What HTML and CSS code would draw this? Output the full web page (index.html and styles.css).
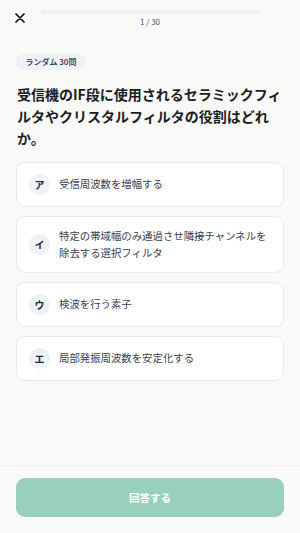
FILE: index.html
```html
<!DOCTYPE html>
<html lang="ja">
<head>
    <meta charset="UTF-8">
    <meta name="viewport" content="width=device-width, initial-scale=1.0">
    <title>クイズ</title>
    <link rel="stylesheet" href="styles.css">
</head>
<body>
    <div class="quiz-screen">
        <header class="quiz-header">
            <button class="close-button" aria-label="閉じる">
                <svg width="10" height="10" viewBox="0 0 10 10">
                    <path d="M1 1 L9 9 M9 1 L1 9" stroke="#111" stroke-width="1.7" stroke-linecap="round" fill="none"/>
                </svg>
            </button>
            <div class="progress">
                <div class="progress-bar"><div class="progress-fill"></div></div>
                <div class="progress-count">1 / 30</div>
            </div>
            <div class="header-spacer"></div>
        </header>

        <main class="quiz-body">
            <div class="mode-tag">ランダム 30問</div>
            <h1 class="question">受信機のIF段に使用されるセラミックフィルタやクリスタルフィルタの役割はどれか。</h1>

            <ul class="choices">
                <li class="choice">
                    <span class="choice-mark">ア</span>
                    <span class="choice-text">受信周波数を増幅する</span>
                </li>
                <li class="choice">
                    <span class="choice-mark">イ</span>
                    <span class="choice-text">特定の帯域幅のみ通過させ隣接チャンネルを除去する選択フィルタ</span>
                </li>
                <li class="choice">
                    <span class="choice-mark">ウ</span>
                    <span class="choice-text">検波を行う素子</span>
                </li>
                <li class="choice">
                    <span class="choice-mark">エ</span>
                    <span class="choice-text">局部発振周波数を安定化する</span>
                </li>
            </ul>
        </main>

        <footer class="quiz-footer">
            <button class="answer-button" disabled>回答する</button>
        </footer>
    </div>
</body>
</html>
```

FILE: styles.css
```css
body {
    margin: 0;
    background-color: #f9f9f8;
    font-family: 'Noto Sans CJK JP', 'Noto Sans', sans-serif;
    color: #1b1d22;
}

.quiz-screen {
    display: flex;
    flex-direction: column;
    height: 533px;
}

.quiz-header {
    display: flex;
    padding: 10px 14px 0;
}

.close-button {
    width: 26px;
    height: 12px;
    margin-top: 3px;
    padding: 0 0 0 1px;
    border: none;
    background: none;
    display: flex;
    align-items: flex-start;
    cursor: pointer;
}

.header-spacer {
    width: 26px;
}

.progress {
    flex: 1;
}

.progress-bar {
    height: 4px;
    border-radius: 2px;
    background-color: #edf1f6;
    overflow: hidden;
}

.progress-fill {
    width: 0;
    height: 100%;
    background-color: #98d0bb;
}

.progress-count {
    margin-top: 2px;
    text-align: center;
    font-size: 8px;
    line-height: 12px;
    color: #4a5263;
}

.quiz-body {
    flex: 1;
    padding: 26px 16px 0;
}

.mode-tag {
    width: fit-content;
    height: 16px;
    line-height: 16px;
    padding: 0 9.5px;
    border-radius: 8px;
    background-color: #eef2f7;
    font-size: 8px;
    font-weight: 500;
    color: #1e2a44;
}

.question {
    margin: 13px 0 13px 1px;
    font-size: 14px;
    line-height: 22px;
    font-weight: 700;
    color: #1b1d22;
}

.choices {
    list-style: none;
    margin: 0;
    padding: 0;
    display: flex;
    flex-direction: column;
    gap: 9px;
}

.choice {
    display: flex;
    align-items: center;
    gap: 9px;
    padding: 11px 12px;
    background-color: #ffffff;
    border: 1px solid #e6e9ef;
    border-radius: 9px;
}

.choice-mark {
    flex: none;
    width: 21px;
    height: 21px;
    border-radius: 50%;
    background-color: #eef2f7;
    display: flex;
    align-items: center;
    justify-content: center;
    font-size: 10px;
    font-weight: 700;
    color: #1e2a44;
}

.choice-text {
    font-size: 10.4px;
    line-height: 16.5px;
    color: #3a404c;
}

.quiz-footer {
    padding: 12px 16px 16px;
    border-top: 1px solid #eff1f5;
}

.answer-button {
    width: 100%;
    height: 39px;
    border: none;
    border-radius: 9px;
    background-color: #98d0bb;
    color: #ffffff;
    font-family: 'Noto Sans CJK JP', sans-serif;
    font-size: 10.5px;
    font-weight: 700;
    cursor: pointer;
}
```
